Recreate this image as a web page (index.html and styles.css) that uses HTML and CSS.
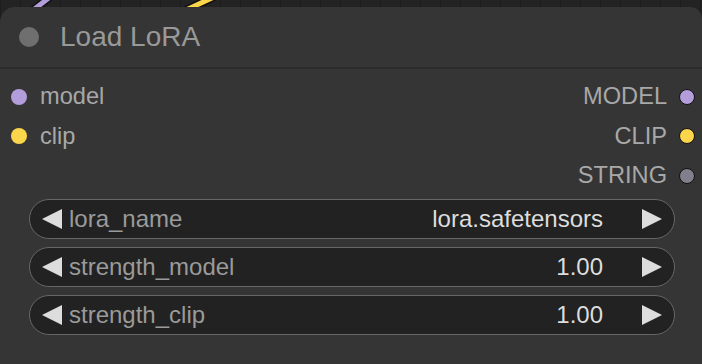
FILE: index.html
```html
<!DOCTYPE html>
<html lang="en">
<head>
    <meta charset="UTF-8">
    <title>Load LoRA</title>
    <link rel="stylesheet" href="styles.css">
</head>
<body>
    <!-- Liens qui arrivent par le haut du canevas -->
    <svg class="wires" width="702" height="12" viewBox="0 0 702 12">
        <line x1="32" y1="11" x2="50" y2="-3" stroke="#111" stroke-width="8"/>
        <line x1="32" y1="11" x2="50" y2="-3" stroke="#b39ddb" stroke-width="5"/>
        <line x1="186" y1="10" x2="214" y2="-3" stroke="#111" stroke-width="8"/>
        <line x1="186" y1="10" x2="214" y2="-3" stroke="#fbd64a" stroke-width="5"/>
    </svg>

    <div class="node">
        <div class="node-title">
            <span class="title-dot"></span>
            <span class="title-text">Load LoRA</span>
        </div>

        <div class="node-body">
            <div class="slots">
                <div class="slot-col">
                    <div class="slot"><span class="dot purple"></span>model</div>
                    <div class="slot"><span class="dot yellow"></span>clip</div>
                </div>
                <div class="slot-col outputs">
                    <div class="slot">MODEL<span class="dot purple out"></span></div>
                    <div class="slot">CLIP<span class="dot yellow out"></span></div>
                    <div class="slot">STRING<span class="dot grey out"></span></div>
                </div>
            </div>

            <div class="widgets">
                <div class="widget">
                    <svg class="arrow" width="20" height="20" viewBox="0 0 20 20"><polygon points="20,0 20,20 0,10" fill="#ddd"/></svg>
                    <span class="w-label">lora_name</span>
                    <span class="w-value">lora.safetensors</span>
                    <svg class="arrow" width="20" height="20" viewBox="0 0 20 20"><polygon points="0,0 0,20 20,10" fill="#ddd"/></svg>
                </div>
                <div class="widget">
                    <svg class="arrow" width="20" height="20" viewBox="0 0 20 20"><polygon points="20,0 20,20 0,10" fill="#ddd"/></svg>
                    <span class="w-label">strength_model</span>
                    <span class="w-value">1.00</span>
                    <svg class="arrow" width="20" height="20" viewBox="0 0 20 20"><polygon points="0,0 0,20 20,10" fill="#ddd"/></svg>
                </div>
                <div class="widget">
                    <svg class="arrow" width="20" height="20" viewBox="0 0 20 20"><polygon points="20,0 20,20 0,10" fill="#ddd"/></svg>
                    <span class="w-label">strength_clip</span>
                    <span class="w-value">1.00</span>
                    <svg class="arrow" width="20" height="20" viewBox="0 0 20 20"><polygon points="0,0 0,20 20,10" fill="#ddd"/></svg>
                </div>
            </div>
        </div>
    </div>
</body>
</html>
```

FILE: styles.css
```css
body {
    margin: 0;
    width: 702px;
    height: 364px;
    overflow: hidden;
    position: relative;
    font-family: "Liberation Sans", Arial, sans-serif;
    background-color: #232323;
    background-image: repeating-linear-gradient(90deg, #1c1c1c 0 1px, transparent 1px 20px);
}

.wires {
    position: absolute;
    top: 0;
    left: 0;
}

.node {
    position: relative; /* au-dessus des liens */
    margin-top: 7px;
    height: 357px;
    background: #353535;
    border-radius: 15px 12px 0 0;
}

.node-title {
    display: flex;
    align-items: center;
    height: 60px;
    border-bottom: 2px solid #2c2c2c;
}

.title-dot {
    width: 20px;
    height: 20px;
    border-radius: 50%;
    background: #6f6f6f;
    margin-left: 19px;
    margin-right: 21px;
}

.title-text {
    font-size: 28px;
    color: #999;
}

.node-body {
    padding-top: 8px;
}

.slots {
    display: flex;
    justify-content: space-between;
}

.slot-col {
    display: flex;
    flex-direction: column;
}

.slot {
    display: flex;
    align-items: center;
    height: 39.5px;
    font-size: 23.6px;
    color: #a8a8a8;
}

.outputs .slot {
    justify-content: flex-end;
}

.dot {
    width: 16px;
    height: 16px;
    border-radius: 50%;
    margin-left: 11px;
    margin-right: 13px;
}

    .dot.out {
        width: 14px;
        height: 14px;
        border: 1.5px solid #111;
        margin-left: 12px;
        margin-right: 7px;
    }

.purple { background: #b39ddb; }
.yellow { background: #fbd64a; }
.grey { background: #80808c; }

.widgets {
    display: flex;
    flex-direction: column;
    gap: 8px;
    margin: 3px 27px 0 29px;
}

.widget {
    display: flex;
    align-items: center;
    height: 40px;
    box-sizing: border-box;
    border: 1.5px solid #676767;
    border-radius: 20px;
    background: #222;
    padding: 0 12px 0 12px;
    font-size: 24px;
}

.arrow {
    flex: none;
}

.w-label {
    color: #9a9a9a;
    margin-left: 7px;
    flex: 1;
}

.w-value {
    color: #ddd;
    margin-right: 39px;
}
```
